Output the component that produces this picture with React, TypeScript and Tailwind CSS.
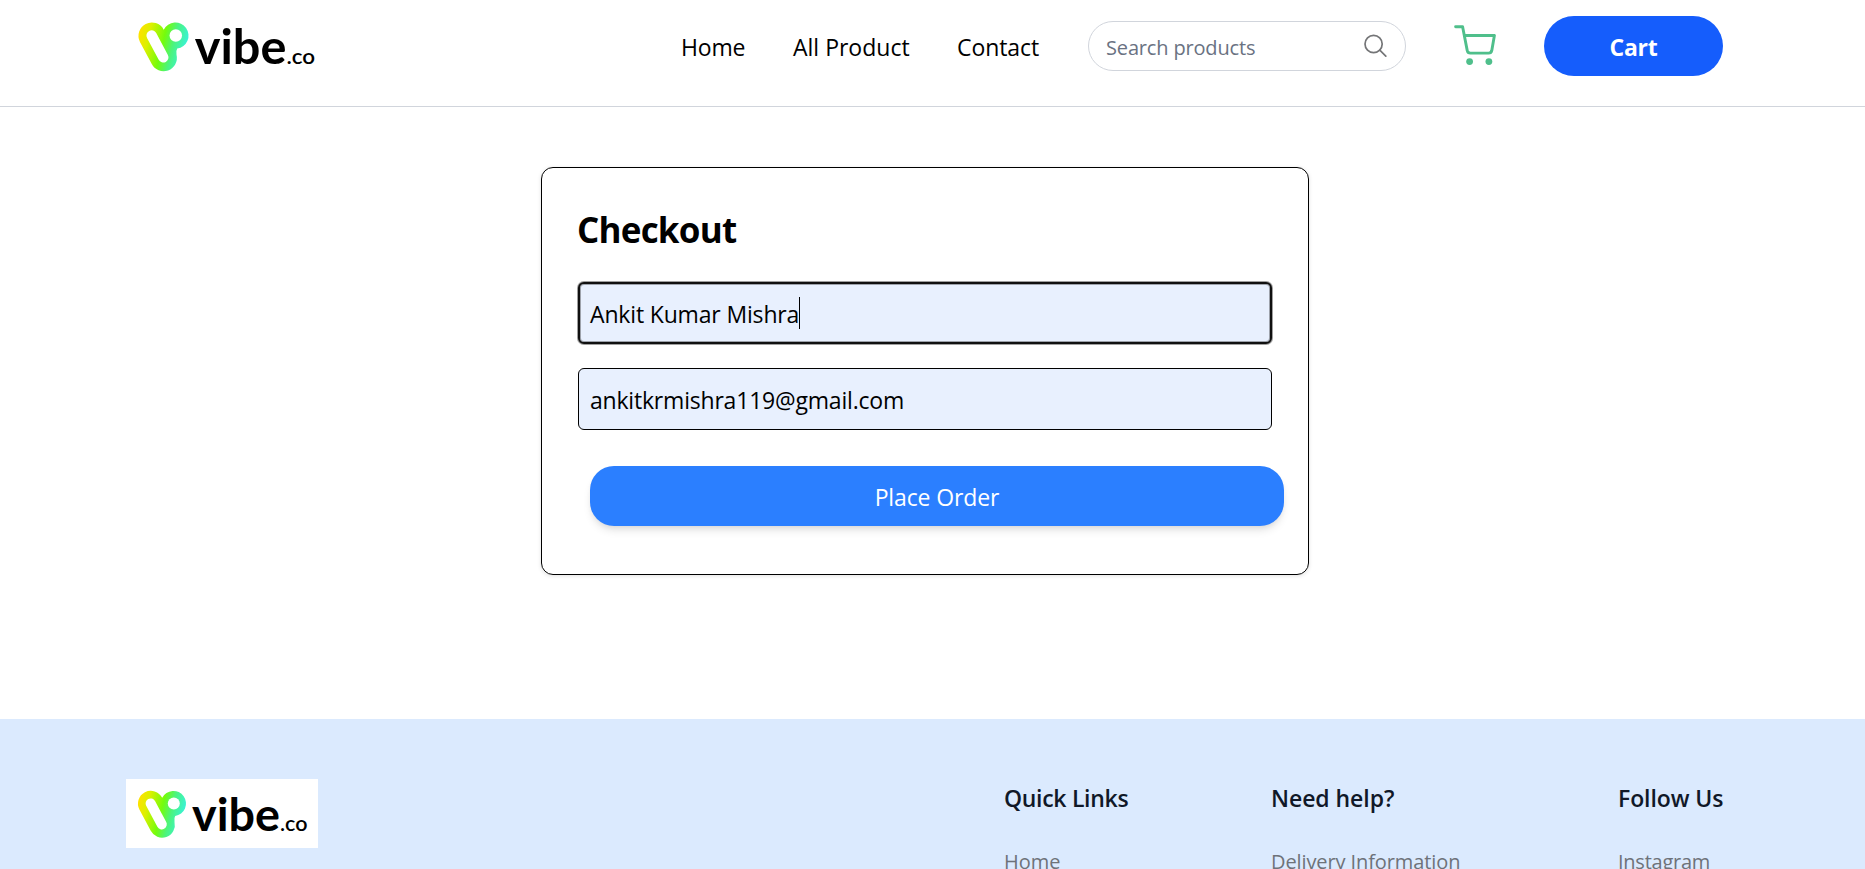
import React from "react";

const navLinks = [
  { label: "Home", cls: "w-[64px] tracking-[-0.2px]" },
  { label: "All Product", cls: "w-[116px]" },
  { label: "Contact", cls: "w-[82px] tracking-[-0.07px]" },
];

const footerColumns = [
  { title: "Quick Links", link: "Home", cls: "w-[124px] mr-[143px]", titleCls: "tracking-[-0.3px]", linkCls: "tracking-[-0.05px]" },
  { title: "Need help?", link: "Delivery Information", cls: "w-[188px] mr-[159px]", titleCls: "tracking-[-0.05px]", linkCls: "tracking-[-0.1px]" },
  { title: "Follow Us", link: "Instagram", cls: "w-[105px]", titleCls: "tracking-[-0.1px]", linkCls: "tracking-[-0.25px]" },
];

function Logo({ id, className }: { id: string; className: string }) {
  return (
    <svg viewBox="0 0 192 69" className={className} aria-label="vibe.co">
      <defs>
        <linearGradient id={id} gradientUnits="userSpaceOnUse" x1="12" y1="20" x2="60" y2="32">
          <stop offset="0" stopColor="#ffe100" />
          <stop offset="0.2" stopColor="#dcf000" />
          <stop offset="0.5" stopColor="#74fc0c" />
          <stop offset="0.7" stopColor="#4cf47c" />
          <stop offset="1" stopColor="#36f2e6" />
        </linearGradient>
      </defs>
      <rect width="192" height="69" fill="#fff" />
      <g transform="translate(0.6 0.4)">
        <path fill={`url(#${id})`} d="M12.8 30.2A12.8 12.8 0 1 1 35.6 18.4A12.6 12.6 0 1 1 48.6 36.6Q47.3 38.5 47.9 42.5A12.8 12.8 0 0 1 24 51.2Z" />
        <path d="M24 24L35.2 45" stroke="#fff" strokeWidth="10" strokeLinecap="round" />
        <circle cx="47.2" cy="24" r="6" fill="#fff" />
      </g>
      <text x="66" y="52" textLength="88" lengthAdjust="spacingAndGlyphs" fontSize="46" fontWeight="700" className="font-['Lato',sans-serif]">vibe</text>
      <text x="154" y="52" textLength="27.5" lengthAdjust="spacingAndGlyphs" fontSize="21" fontWeight="600" className="font-['Lato',sans-serif]">.co</text>
    </svg>
  );
}

function SearchIcon() {
  return (
    <svg viewBox="0 0 24 24" className="h-6 w-6 shrink-0" fill="none" stroke="#747577" strokeWidth="1.7" strokeLinecap="round">
      <circle cx="10.6" cy="10" r="8.6" />
      <path d="M16.8 16.2L22.8 22.2" />
    </svg>
  );
}

function CartIcon() {
  return (
    <svg viewBox="0 0 42 42" className="h-[42px] w-[42px] shrink-0" fill="none" stroke="#4fbf8b" strokeWidth="2.9" strokeLinecap="round" strokeLinejoin="round">
      <path d="M1.6 1.7H8.6L13.2 25.4Q13.8 28.1 16.4 28.1H34.6Q37.2 28.1 37.8 25.4L40.4 10.5H10.3" />
      <circle cx="15.6" cy="36.6" r="3.4" fill="#4fbf8b" stroke="none" />
      <circle cx="34.9" cy="36.6" r="3.4" fill="#4fbf8b" stroke="none" />
    </svg>
  );
}

export default function App() {
  return (
    <div className="h-[869px] overflow-hidden bg-white font-['Open_Sans',sans-serif] text-black">
      <header className="flex h-[107px] items-start justify-between border-b border-[#d1d5dc] pl-[126px] pr-[142px] pt-[10px]">
        <Logo id="headerLogo" className="h-[72px] w-[200px]" />
        <nav className="flex h-[72px] items-center text-[23px]">
          <div className="mr-[49px] flex gap-12">
            {navLinks.map((l) => (
              <a key={l.label} className={`whitespace-nowrap pt-px leading-9 ${l.cls}`}>{l.label}</a>
            ))}
          </div>
          <div className="mr-12 flex h-[50px] w-[318px] items-center justify-between rounded-full border border-[#d1d5dc] pl-[17px] pr-[18px]">
            <span className="pt-[3px] text-[20px] tracking-[-0.16px] text-[#6a7282]">Search products</span>
            <SearchIcon />
          </div>
          <CartIcon />
          <button className="ml-12 h-[60px] w-[179px] rounded-full bg-[#155dfc] pt-[3px] font-bold tracking-[-0.3px] text-white">Cart</button>
        </nav>
      </header>

      <main className="flex h-[612px] justify-center pr-[15px] pt-[60px]">
        <form className="flex h-[408px] w-[768px] flex-col rounded-xl border border-black px-9 pt-[35px] shadow-[0_1px_4px_rgba(0,0,0,0.12)]">
          <h1 className="-ml-px h-[79px] text-[35px] font-bold leading-[54px] tracking-[-0.78px]">Checkout</h1>
          <div className="flex h-[62px] w-[694px] items-center rounded-md border-2 border-[#101010] bg-[#e8f0fe] pl-[10px] text-[23px] shadow-[0_0_0_1px_rgba(16,16,16,0.4),inset_0_0_0_1px_rgba(16,16,16,0.35)]">
            <span className="whitespace-nowrap pt-[3px] tracking-[-0.16px]">Ankit Kumar Mishra</span>
            <span className="h-8 w-px bg-black" />
          </div>
          <div className="mt-6 flex h-[62px] w-[694px] items-center rounded-md border border-black bg-[#e8f0fe] pl-[11px] text-[23px]">
            <span className="whitespace-nowrap pt-[3px] tracking-[-0.2px]">ankitkrmishra119@gmail.com</span>
          </div>
          <button type="button" className="ml-3 mt-9 h-[60px] w-[694px] rounded-3xl bg-[#2b7fff] pt-[3px] text-[23px] tracking-[-0.12px] text-white shadow-[0_6px_9px_-1.5px_rgba(0,0,0,0.1),0_3px_6px_-3px_rgba(0,0,0,0.1)]">
            Place Order
          </button>
        </form>
      </main>

      <footer className="flex h-[150px] items-start bg-[#dbeafe] pl-[126px] pr-[142px] pt-[60px]">
        <Logo id="footerLogo" className="mr-auto h-[69px] w-[192px]" />
        {footerColumns.map((c) => (
          <section key={c.title} className={`shrink-0 whitespace-nowrap ${c.cls}`}>
            <h3 className={`pt-px text-[23px] font-semibold leading-9 text-[#101828] ${c.titleCls}`}>{c.title}</h3>
            <a className={`mt-[31px] block text-[20px] leading-[30px] text-[#6e7279] ${c.linkCls}`}>{c.link}</a>
          </section>
        ))}
      </footer>
    </div>
  );
}
